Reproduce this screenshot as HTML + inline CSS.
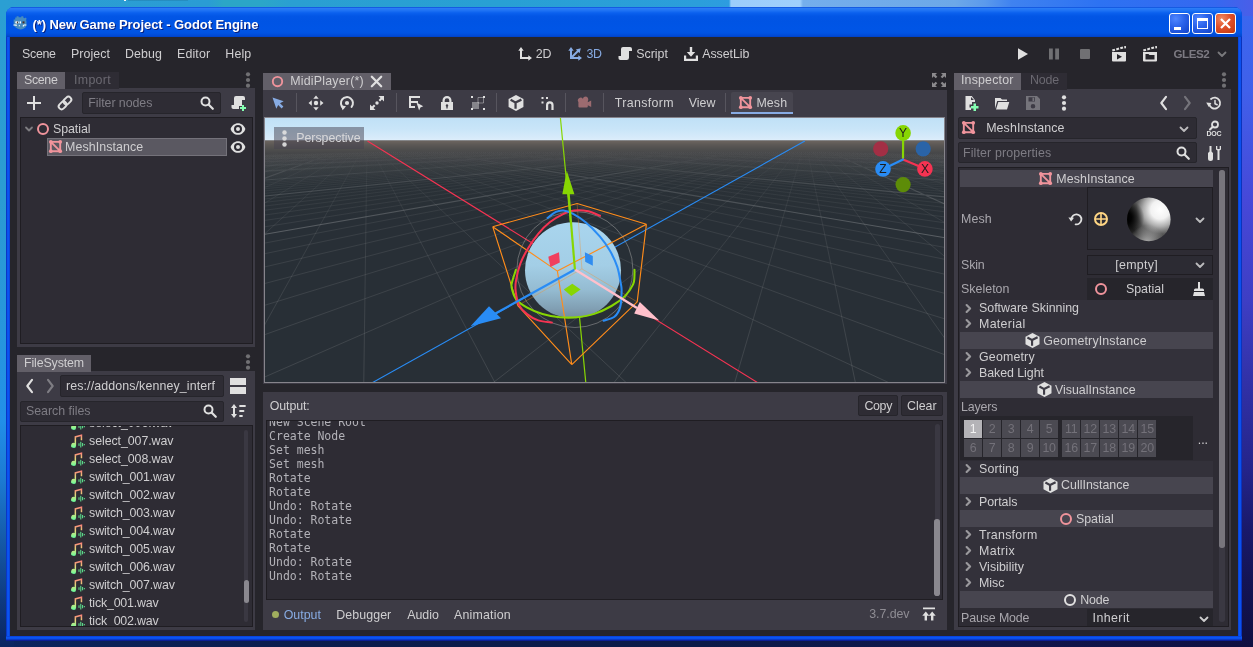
<!DOCTYPE html>
<html lang="en"><head><meta charset="utf-8"><title>(*) New Game Project - Godot Engine</title>
<style>html,body{margin:0;padding:0}body{width:1253px;height:647px;overflow:hidden;position:relative;background:#0b1c4d;font-family:'Liberation Sans','DejaVu Sans',sans-serif;font-size:12.4px;color:#cfced0}div,svg{position:absolute;box-sizing:border-box}svg{overflow:visible}</style></head>
<body><div id="root" style="left:0;top:0;width:1253px;height:647px;will-change:transform">
<div style="left:0px;top:630px;width:1253px;height:17px;background:linear-gradient(to right,#0a2560 0px,#0b2258 80px,#0b1c4d 300px,#0b1a48 700px,#10164c 1000px,#0f0f42 1253px);"></div>
<div style="left:1230px;top:0px;width:23px;height:647px;background:linear-gradient(to bottom,#3a68f0 0px,#4060ea 90px,#4648d8 200px,#3e3ec4 300px,#3030a4 390px,#24248a 470px,#19196a 530px,#141454 580px,#0f0f40 647px);"></div>
<div style="left:0px;top:0px;width:14px;height:647px;background:linear-gradient(to bottom,#2b9fd3 0px,#2b9bd2 200px,#2796dc 330px,#228fe8 420px,#1c7ad2 480px,#155aa8 540px,#0e3a80 600px,#0a2560 647px);"></div>
<div style="left:0px;top:0px;width:1253px;height:16px;background:linear-gradient(to right,#2b9fd3 0px,#2a9cd4 208px,#2ba6c6 224px,#2ba6c8 262px,#2a9fd2 292px,#28a0d4 500px,#2b9edb 700px,#2d9ce0 729px,#9bcdfb 731px,#a0d0fc 800px,#74aeec 803px,#6ca8e8 955px,#5b9aec 985px,#3f82f0 1012px,#2d72f2 1100px,#3568f0 1215px,#4a5ee8 1253px);"></div>
<div style="left:123.6px;top:0px;width:2.6px;height:1.4px;background:#f4f8fb;"></div>
<div style="left:128px;top:0px;width:60px;height:1px;background:rgba(20,60,90,.16);"></div>
<div style="left:6px;top:7px;width:1236px;height:634px;background:linear-gradient(to right,#0a24a8 0px,#0a50ee 1.2px,#0a55f2 2.6px,#0a3cd0 4px,#0a3cd0 1232px,#0a55f2 1233.2px,#0a50ee 1234.8px,#0a1e98 1236px);border-radius:8px 8px 0 0;"></div>
<div style="left:6px;top:636px;width:1236px;height:5px;background:linear-gradient(to bottom,#0a3cd0 0px,#0a55f2 1.4px,#0a4ee8 2.8px,#0a1e98 4.4px,#0a1a80 5px);"></div>
<div style="left:6px;top:7px;width:1236px;height:30px;background:linear-gradient(to bottom,#0a4ad8 0px,#2a7cf6 1.5px,#1e72f4 3.5px,#0a60ee 6px,#0356e6 9px,#0054e4 14px,#0055e6 22px,#0053e2 26px,#0048d2 29px,#0040c4 30px);border-radius:8px 8px 0 0;"></div>
<svg style="left:11.5px;top:15.3px" width="16" height="16" viewBox="0 0 16 16"><path d="M4.6 1.2h2v1.1h2.7V1.2h2v1.3l1.2.8 1-.8 1.2 1.2-.7 1.2.5 1.3v4.6l-1.3 1.9-2.3 1.4-2.2.4-2.4-.4-2.3-1.4L1.7 10.8V4.4h1.5V2.6l1.4-.2z" fill="#478cbf"/><rect x="3.3" y="6.3" width="3.4" height="2.3" rx=".8" fill="#fff"/><rect x="4.9" y="6.5" width="1" height="2" fill="#3a2a22"/><rect x="7.6" y="6.3" width="1.4" height="2.3" rx=".5" fill="#fff"/><rect x="10.5" y="6.4" width="2" height="2" fill="#4a3026"/><path d="M1.5 9.4h3.2v1.6H3.6V10.4H1.5zM14.3 9.4h-2.4l-1.2 1.1v.9h1.2v-.9h2.4zM6.8 10.2h1.1v1.1H6.8z" fill="#fff"/></svg>
<div style="top:16.6px;line-height:16px;font-size:13px;color:#fff;white-space:pre;letter-spacing:-0.064px;font-weight:bold;left:32.4px;text-shadow:1px 1px 0 #0a1f7a;">(*) New Game Project - Godot Engine</div>
<div style="left:1169px;top:13px;width:21px;height:21px;background:radial-gradient(circle at 30% 25%,#4f86ff 0%,#2a62ea 45%,#1242c8 100%);border:1px solid #fff;border-radius:3px;"><div style="left:4px;top:13px;width:7px;height:3px;background:#fff"></div></div>
<div style="left:1192px;top:13px;width:21px;height:21px;background:radial-gradient(circle at 30% 25%,#4f86ff 0%,#2a62ea 45%,#1242c8 100%);border:1px solid #fff;border-radius:3px;"><div style="left:4px;top:4px;width:11px;height:11px;border:1px solid #fff;border-top:3px solid #fff"></div></div>
<div style="left:1215px;top:13px;width:21px;height:21px;background:radial-gradient(circle at 30% 25%,#f08a62 0%,#e0502a 45%,#c0360c 100%);border:1px solid #fff;border-radius:3px;"><svg style="left:3px;top:3px" width="13" height="13" viewBox="0 0 13 13"><path d="M2 2l9 9M11 2l-9 9" stroke="#fff" stroke-width="2.2" stroke-linecap="butt"/></svg></div>
<div style="left:10px;top:37px;width:1228px;height:599px;background:#26252b;"></div>
<svg width="0" height="0" style="left:0;top:0"><defs><linearGradient id="ag" x1="0" y1="0" x2="0" y2="1"><stop offset="0" stop-color="#ff7a7a"/><stop offset=".5" stop-color="#e1dc7a"/><stop offset="1" stop-color="#66ff9e"/></linearGradient></defs></svg>
<div style="top:45.6px;line-height:16px;font-size:12.4px;color:#cfced0;white-space:pre;letter-spacing:-0.328px;left:22.1px;">Scene</div>
<div style="top:45.6px;line-height:16px;font-size:12.4px;color:#cfced0;white-space:pre;letter-spacing:0.060px;left:71px;">Project</div>
<div style="top:45.6px;line-height:16px;font-size:12.4px;color:#cfced0;white-space:pre;letter-spacing:0.097px;left:125px;">Debug</div>
<div style="top:45.6px;line-height:16px;font-size:12.4px;color:#cfced0;white-space:pre;letter-spacing:0.137px;left:177px;">Editor</div>
<div style="top:45.6px;line-height:16px;font-size:12.4px;color:#cfced0;white-space:pre;letter-spacing:0.154px;left:225.3px;">Help</div>
<svg style="left:516.6px;top:45.6px;" width="16" height="16" viewBox="0 0 16 16"><path d="M4 1L1.3 4.7H3V13h8.3v1.7L15 12l-3.7-2.7V11H5V4.7h1.7z" fill="#e0e0e0" /></svg>
<div style="top:45.6px;line-height:16px;font-size:12.4px;color:#cfced0;white-space:pre;letter-spacing:-0.072px;left:535.7px;">2D</div>
<svg style="left:566.9px;top:45.6px;" width="16" height="16" viewBox="0 0 16 16"><path d="M4 1L1.3 4.7H3V13h8.3v1.7L15 12l-3.7-2.7V11H6.4l5-5 1.2 1.2L13.8 2.2 8.8 3.4 10 4.6l-5 5V4.7h1.7z" fill="#87abe3" /></svg>
<div style="top:45.6px;line-height:16px;font-size:12.4px;color:#87abe3;white-space:pre;letter-spacing:-0.522px;left:586.6px;">3D</div>
<svg style="left:616.5px;top:45.6px;" width="16" height="16" viewBox="0 0 16 16"><path d="M6 1a2 2 0 0 0-2 2v7H1.5v2.2A1.8 1.8 0 0 0 3.3 14h6.4A2.3 2.3 0 0 0 12 11.7V5h3V3a2 2 0 0 0-2-2z" fill="#e0e0e0" /></svg>
<div style="top:45.6px;line-height:16px;font-size:12.4px;color:#cfced0;white-space:pre;letter-spacing:0.019px;left:636.2px;">Script</div>
<svg style="left:682.5px;top:45.6px;" width="16" height="16" viewBox="0 0 16 16"><path d="M6.8 1h2.4v5h3L8 10.8 3.8 6h3zM1 9.5h2.2v3.3h9.6V9.5H15V15H1z" fill="#e0e0e0" /></svg>
<div style="top:45.6px;line-height:16px;font-size:12.4px;color:#cfced0;white-space:pre;letter-spacing:-0.079px;left:702.3px;">AssetLib</div>
<svg style="left:1014.3px;top:45.6px;" width="16" height="16" viewBox="0 0 16 16"><path d="M4 2.3l10 5.7-10 5.7z" fill="#e0e0e0" /></svg>
<svg style="left:1046.2px;top:45.6px;" width="16" height="16" viewBox="0 0 16 16"><path d="M3 2.5h3.8v11H3zM9.2 2.5H13v11H9.2z" fill="#e0e0e0" fill-opacity=".4"/></svg>
<svg style="left:1076.9px;top:45.6px;" width="16" height="16" viewBox="0 0 16 16"><rect x="3" y="3" width="10" height="10" rx="1" fill="#e0e0e0" fill-opacity=".4"/></svg>
<svg style="left:1110.5px;top:45.6px;" width="16" height="16" viewBox="0 0 16 16"><path d="M1 3.6l2.7-.8.6 2-2.7.8zM5 2.4l2.7-.8.6 2-2.7.8zM9 1.3l2.7-.8.6 2-2.7.8zM13 .3L15 0v2.2l-1.5.3zM1 6h14v8.5a1 1 0 0 1-1 1H2a1 1 0 0 1-1-1z" fill="#e0e0e0" /><path d="M6 8v5.5l5-2.7z" fill="#26252b" /></svg>
<svg style="left:1141.8px;top:45.6px;" width="16" height="16" viewBox="0 0 16 16"><path d="M1 3.6l2.7-.8.6 2-2.7.8zM5 2.4l2.7-.8.6 2-2.7.8zM9 1.3l2.7-.8.6 2-2.7.8zM13 .3L15 0v2.2l-1.5.3zM1 6h14v8.5a1 1 0 0 1-1 1H2a1 1 0 0 1-1-1z" fill="#e0e0e0" /><path d="M3.5 8h3l1 1h5v4.5h-9z" fill="#26252b" /></svg>
<div style="top:45.6px;line-height:16px;font-size:11.6px;color:#7c7a82;white-space:pre;letter-spacing:-0.443px;font-weight:bold;left:1173.5px;">GLES2</div>
<svg style="left:1214.3px;top:46.1px;opacity:0.45;" width="16" height="16" viewBox="0 0 16 16"><path d="M4.5 6.5L8 10l3.5-3.5" fill="none" stroke="#e0e0e0" stroke-width="1.8" stroke-linecap="round" stroke-linejoin="round" /></svg>
<div style="left:17px;top:88px;width:238px;height:259px;background:#3d3b45;"></div>
<div style="left:17px;top:72px;width:48px;height:17px;background:#625f68;"></div>
<div style="top:72.1px;line-height:16px;font-size:12.4px;color:#cfced0;white-space:pre;letter-spacing:-0.328px;left:24px;">Scene</div>
<div style="left:65px;top:72px;width:54px;height:17px;background:#2e2c34;"></div>
<div style="top:72.1px;line-height:16px;font-size:12.4px;color:#6b6971;white-space:pre;letter-spacing:0.312px;left:74px;">Import</div>
<svg style="left:240px;top:72px;opacity:0.4;" width="16" height="16" viewBox="0 0 16 16"><g fill="#e0e0e0"><circle cx="8" cy="2.3" r="2.1"/><circle cx="8" cy="8" r="2.1"/><circle cx="8" cy="13.7" r="2.1"/></g></svg>
<svg style="left:26px;top:95.3px;" width="16" height="16" viewBox="0 0 16 16"><path d="M7 1v6H1v2h6v6h2V9h6V7H9V1z" fill="#e0e0e0" /></svg>
<svg style="left:57px;top:95.3px;" width="16" height="16" viewBox="0 0 16 16"><g transform="rotate(-45 8 8)" fill="none" stroke="#e0e0e0" stroke-width="1.9"><rect x=".3" y="5.1" width="8.6" height="5.8" rx="2.9"/><rect x="7.1" y="5.1" width="8.6" height="5.8" rx="2.9"/></g></svg>
<div style="left:82px;top:92px;width:139px;height:21.5px;background:#2e2c34;border:1px solid #26252b;border-radius:2px;"></div>
<div style="top:95.2px;line-height:16px;font-size:12.4px;color:#7e7c84;white-space:pre;letter-spacing:-0.062px;left:88.3px;">Filter nodes</div>
<svg style="left:199px;top:95.3px;" width="16" height="16" viewBox="0 0 16 16"><circle cx="6.5" cy="6.5" r="4" fill="none" stroke="#e0e0e0" stroke-width="2"/><path d="M9.8 9.8l4 4" fill="none" stroke="#e0e0e0" stroke-width="2.2" stroke-linecap="round" stroke-linejoin="round" /></svg>
<svg style="left:230px;top:95px;" width="16" height="16" viewBox="0 0 16 16"><path d="M6 1a2 2 0 0 0-2 2v7H1.5v2.2A1.8 1.8 0 0 0 3.3 14H9v-3h3V5h3V3a2 2 0 0 0-2-2z" fill="#e0e0e0" /><path d="M12 10v2h-2v2h2v2h2v-2h2v-2h-2v-2z" fill="#84ffb1" /></svg>
<div style="left:20px;top:117px;width:232.5px;height:227px;background:#2e2c34;border:1px solid #1f1d22;"></div>
<svg style="left:20.8px;top:121px;" width="16" height="16" viewBox="0 0 16 16"><path d="M5 6.5l3 3 3-3" fill="none" stroke="#e0e0e0" stroke-width="1.8" stroke-linecap="round" stroke-linejoin="round" stroke-opacity=".45"/></svg>
<svg style="left:34.8px;top:120.8px;" width="16" height="16" viewBox="0 0 16 16"><circle cx="8" cy="8" r="5" fill="none" stroke="#f0949c" stroke-width="2"/></svg>
<div style="top:120.8px;line-height:16px;font-size:12.4px;color:#cfced0;white-space:pre;letter-spacing:-0.070px;left:53px;">Spatial</div>
<svg style="left:230px;top:121px;" width="16" height="16" viewBox="0 0 16 16"><path fill-rule="evenodd" d="M8 2.2C4.6 2.2 1.7 4.5.6 8c1.1 3.5 4 5.8 7.4 5.8s6.3-2.3 7.4-5.8C14.3 4.5 11.4 2.2 8 2.2zM8 4a4 4 0 0 1 0 8 4 4 0 0 1 0-8zm0 2a2 2 0 0 0 0 4 2 2 0 0 0 0-4z" fill="#e0e0e0"/></svg>
<div style="left:47px;top:138px;width:180px;height:18px;background:#5a5861;border:1px solid #74727a;"></div>
<svg style="left:47.7px;top:139.2px;" width="15" height="15" viewBox="0 0 16 16"><path d="M3 3h10v10H3zM3 3l10 10" fill="none" stroke="#f0949c" stroke-width="2"/><g fill="#f0949c"><circle cx="3" cy="3" r="2"/><circle cx="13" cy="3" r="2"/><circle cx="3" cy="13" r="2"/><circle cx="13" cy="13" r="2"/></g></svg>
<div style="top:138.7px;line-height:16px;font-size:12.4px;color:#cfced0;white-space:pre;letter-spacing:0.097px;left:65px;">MeshInstance</div>
<svg style="left:230px;top:139px;" width="16" height="16" viewBox="0 0 16 16"><path fill-rule="evenodd" d="M8 2.2C4.6 2.2 1.7 4.5.6 8c1.1 3.5 4 5.8 7.4 5.8s6.3-2.3 7.4-5.8C14.3 4.5 11.4 2.2 8 2.2zM8 4a4 4 0 0 1 0 8 4 4 0 0 1 0-8zm0 2a2 2 0 0 0 0 4 2 2 0 0 0 0-4z" fill="#e0e0e0"/></svg>
<div style="left:17px;top:371px;width:238px;height:259px;background:#3d3b45;"></div>
<div style="left:17px;top:355px;width:74px;height:17px;background:#625f68;"></div>
<div style="top:355.1px;line-height:16px;font-size:12.4px;color:#cfced0;white-space:pre;letter-spacing:-0.128px;left:24px;">FileSystem</div>
<svg style="left:240px;top:353.6px;opacity:0.4;" width="16" height="16" viewBox="0 0 16 16"><g fill="#e0e0e0"><circle cx="8" cy="2.3" r="2.1"/><circle cx="8" cy="8" r="2.1"/><circle cx="8" cy="13.7" r="2.1"/></g></svg>
<svg style="left:22px;top:378px;" width="16" height="16" viewBox="0 0 16 16"><path d="M10 1.8L5.3 8l4.7 6.2" fill="none" stroke="#e0e0e0" stroke-width="2.1" stroke-linecap="round" stroke-linejoin="round" /></svg>
<svg style="left:41.8px;top:378px;opacity:0.4;" width="16" height="16" viewBox="0 0 16 16"><path d="M6 1.8L10.7 8 6 14.2" fill="none" stroke="#e0e0e0" stroke-width="2.1" stroke-linecap="round" stroke-linejoin="round" /></svg>
<div style="left:60px;top:375px;width:164px;height:22px;background:#2e2c34;border:1px solid #26252b;border-radius:2px;"></div>
<div style="top:378px;line-height:16px;font-size:12.4px;color:#cfced0;white-space:pre;letter-spacing:0.114px;left:66px;">res://addons/kenney_interf</div>
<svg style="left:230px;top:378px;" width="16" height="16" viewBox="0 0 16 16"><path d="M0 0h16v7H0zM0 9h16v7H0z" fill="#e0e0e0" /></svg>
<div style="left:20px;top:400.5px;width:204px;height:21.5px;background:#2e2c34;border:1px solid #26252b;border-radius:2px;"></div>
<div style="top:403px;line-height:16px;font-size:12.4px;color:#7e7c84;white-space:pre;letter-spacing:-0.021px;left:26px;">Search files</div>
<svg style="left:201.7px;top:403px;" width="16" height="16" viewBox="0 0 16 16"><circle cx="6.5" cy="6.5" r="4" fill="none" stroke="#e0e0e0" stroke-width="2"/><path d="M9.8 9.8l4 4" fill="none" stroke="#e0e0e0" stroke-width="2.2" stroke-linecap="round" stroke-linejoin="round" /></svg>
<svg style="left:230px;top:403px;" width="16" height="16" viewBox="0 0 16 16"><path d="M4 1L1 5h2v6H1l3 4 3-4H5V5h2z" fill="#e0e0e0" /><path d="M10 3h5M10 8h3.5M10 13h2" fill="none" stroke="#e0e0e0" stroke-width="1.8" stroke-linecap="round" stroke-linejoin="round" stroke-linecap="butt"/></svg>
<div style="left:20px;top:425px;width:232.5px;height:202px;background:#2e2c34;border:1px solid #1f1d22;overflow:hidden;"><svg style="left:48.9px;top:-11.1px;" width="16" height="16" viewBox="0 0 16 16"><path d="M4.6 3.3l7.6-2v6h-1.5V3.2L6.1 4.4v8a2.5 2.5 0 1 1-1.5-2.3z" fill="url(#ag)"/><path d="M9 10.3v2.6M10.8 8.8v5.7M12.6 10v3.3M14.3 11v1.3" stroke="#66ff9e" stroke-width=".9" fill="none"/></svg><div style="top:-11.4px;line-height:16px;font-size:12.4px;color:#cfced0;white-space:pre;letter-spacing:-0.080px;left:68.1px;">select_006.wav</div><svg style="left:48.9px;top:6.9px;" width="16" height="16" viewBox="0 0 16 16"><path d="M4.6 3.3l7.6-2v6h-1.5V3.2L6.1 4.4v8a2.5 2.5 0 1 1-1.5-2.3z" fill="url(#ag)"/><path d="M9 10.3v2.6M10.8 8.8v5.7M12.6 10v3.3M14.3 11v1.3" stroke="#66ff9e" stroke-width=".9" fill="none"/></svg><div style="top:6.6px;line-height:16px;font-size:12.4px;color:#cfced0;white-space:pre;letter-spacing:-0.080px;left:68.1px;">select_007.wav</div><svg style="left:48.9px;top:24.9px;" width="16" height="16" viewBox="0 0 16 16"><path d="M4.6 3.3l7.6-2v6h-1.5V3.2L6.1 4.4v8a2.5 2.5 0 1 1-1.5-2.3z" fill="url(#ag)"/><path d="M9 10.3v2.6M10.8 8.8v5.7M12.6 10v3.3M14.3 11v1.3" stroke="#66ff9e" stroke-width=".9" fill="none"/></svg><div style="top:24.6px;line-height:16px;font-size:12.4px;color:#cfced0;white-space:pre;letter-spacing:-0.080px;left:68.1px;">select_008.wav</div><svg style="left:48.9px;top:43px;" width="16" height="16" viewBox="0 0 16 16"><path d="M4.6 3.3l7.6-2v6h-1.5V3.2L6.1 4.4v8a2.5 2.5 0 1 1-1.5-2.3z" fill="url(#ag)"/><path d="M9 10.3v2.6M10.8 8.8v5.7M12.6 10v3.3M14.3 11v1.3" stroke="#66ff9e" stroke-width=".9" fill="none"/></svg><div style="top:42.7px;line-height:16px;font-size:12.4px;color:#cfced0;white-space:pre;letter-spacing:-0.133px;left:68.1px;">switch_001.wav</div><svg style="left:48.9px;top:61px;" width="16" height="16" viewBox="0 0 16 16"><path d="M4.6 3.3l7.6-2v6h-1.5V3.2L6.1 4.4v8a2.5 2.5 0 1 1-1.5-2.3z" fill="url(#ag)"/><path d="M9 10.3v2.6M10.8 8.8v5.7M12.6 10v3.3M14.3 11v1.3" stroke="#66ff9e" stroke-width=".9" fill="none"/></svg><div style="top:60.7px;line-height:16px;font-size:12.4px;color:#cfced0;white-space:pre;letter-spacing:-0.133px;left:68.1px;">switch_002.wav</div><svg style="left:48.9px;top:79px;" width="16" height="16" viewBox="0 0 16 16"><path d="M4.6 3.3l7.6-2v6h-1.5V3.2L6.1 4.4v8a2.5 2.5 0 1 1-1.5-2.3z" fill="url(#ag)"/><path d="M9 10.3v2.6M10.8 8.8v5.7M12.6 10v3.3M14.3 11v1.3" stroke="#66ff9e" stroke-width=".9" fill="none"/></svg><div style="top:78.7px;line-height:16px;font-size:12.4px;color:#cfced0;white-space:pre;letter-spacing:-0.133px;left:68.1px;">switch_003.wav</div><svg style="left:48.9px;top:97px;" width="16" height="16" viewBox="0 0 16 16"><path d="M4.6 3.3l7.6-2v6h-1.5V3.2L6.1 4.4v8a2.5 2.5 0 1 1-1.5-2.3z" fill="url(#ag)"/><path d="M9 10.3v2.6M10.8 8.8v5.7M12.6 10v3.3M14.3 11v1.3" stroke="#66ff9e" stroke-width=".9" fill="none"/></svg><div style="top:96.7px;line-height:16px;font-size:12.4px;color:#cfced0;white-space:pre;letter-spacing:-0.133px;left:68.1px;">switch_004.wav</div><svg style="left:48.9px;top:115px;" width="16" height="16" viewBox="0 0 16 16"><path d="M4.6 3.3l7.6-2v6h-1.5V3.2L6.1 4.4v8a2.5 2.5 0 1 1-1.5-2.3z" fill="url(#ag)"/><path d="M9 10.3v2.6M10.8 8.8v5.7M12.6 10v3.3M14.3 11v1.3" stroke="#66ff9e" stroke-width=".9" fill="none"/></svg><div style="top:114.7px;line-height:16px;font-size:12.4px;color:#cfced0;white-space:pre;letter-spacing:-0.133px;left:68.1px;">switch_005.wav</div><svg style="left:48.9px;top:133px;" width="16" height="16" viewBox="0 0 16 16"><path d="M4.6 3.3l7.6-2v6h-1.5V3.2L6.1 4.4v8a2.5 2.5 0 1 1-1.5-2.3z" fill="url(#ag)"/><path d="M9 10.3v2.6M10.8 8.8v5.7M12.6 10v3.3M14.3 11v1.3" stroke="#66ff9e" stroke-width=".9" fill="none"/></svg><div style="top:132.7px;line-height:16px;font-size:12.4px;color:#cfced0;white-space:pre;letter-spacing:-0.133px;left:68.1px;">switch_006.wav</div><svg style="left:48.9px;top:151px;" width="16" height="16" viewBox="0 0 16 16"><path d="M4.6 3.3l7.6-2v6h-1.5V3.2L6.1 4.4v8a2.5 2.5 0 1 1-1.5-2.3z" fill="url(#ag)"/><path d="M9 10.3v2.6M10.8 8.8v5.7M12.6 10v3.3M14.3 11v1.3" stroke="#66ff9e" stroke-width=".9" fill="none"/></svg><div style="top:150.7px;line-height:16px;font-size:12.4px;color:#cfced0;white-space:pre;letter-spacing:-0.133px;left:68.1px;">switch_007.wav</div><svg style="left:48.9px;top:169px;" width="16" height="16" viewBox="0 0 16 16"><path d="M4.6 3.3l7.6-2v6h-1.5V3.2L6.1 4.4v8a2.5 2.5 0 1 1-1.5-2.3z" fill="url(#ag)"/><path d="M9 10.3v2.6M10.8 8.8v5.7M12.6 10v3.3M14.3 11v1.3" stroke="#66ff9e" stroke-width=".9" fill="none"/></svg><div style="top:168.7px;line-height:16px;font-size:12.4px;color:#cfced0;white-space:pre;letter-spacing:-0.187px;left:68.1px;">tick_001.wav</div><svg style="left:48.9px;top:187px;" width="16" height="16" viewBox="0 0 16 16"><path d="M4.6 3.3l7.6-2v6h-1.5V3.2L6.1 4.4v8a2.5 2.5 0 1 1-1.5-2.3z" fill="url(#ag)"/><path d="M9 10.3v2.6M10.8 8.8v5.7M12.6 10v3.3M14.3 11v1.3" stroke="#66ff9e" stroke-width=".9" fill="none"/></svg><div style="top:186.7px;line-height:16px;font-size:12.4px;color:#cfced0;white-space:pre;letter-spacing:-0.187px;left:68.1px;">tick_002.wav</div></div>
<div style="left:244.3px;top:430px;width:3.4px;height:192px;background:#3a3842;border-radius:2px;"></div>
<div style="left:243.6px;top:579.5px;width:5px;height:23.3px;background:#8a888f;border-radius:2.5px;"></div>
<div style="left:263px;top:72.5px;width:128px;height:17.5px;background:#625f68;"></div>
<svg style="left:270.1px;top:73.5px;" width="15" height="15" viewBox="0 0 16 16"><circle cx="8" cy="8" r="5" fill="none" stroke="#f0949c" stroke-width="2"/></svg>
<div style="top:72.9px;line-height:16px;font-size:12.4px;color:#cfced0;white-space:pre;letter-spacing:0.214px;left:290.2px;">MidiPlayer(*)</div>
<svg style="left:368.7px;top:73.5px;" width="15" height="15" viewBox="0 0 16 16"><path d="M3 3l10 10M13 3L3 13" fill="none" stroke="#e0e0e0" stroke-width="2.4" stroke-linecap="round" stroke-linejoin="round" stroke-linecap="butt"/></svg>
<svg style="left:930.8px;top:71.8px;" width="16" height="16" viewBox="0 0 16 16"><path d="M1 1h5L4.3 2.7l2 2-1.6 1.6-2-2L1 6zM15 1v5l-1.7-1.7-2 2-1.6-1.6 2-2L10 1zM1 15v-5l1.7 1.7 2-2 1.6 1.6-2 2L6 15zM15 15h-5l1.7-1.7-2-2 1.6-1.6 2 2L15 10z" fill="#e0e0e0" fill-opacity=".55"/></svg>
<div style="left:263px;top:90px;width:684px;height:294px;background:#3d3b45;"></div>
<svg style="left:270.2px;top:94.7px;" width="16" height="16" viewBox="0 0 16 16"><path d="M2.5 2.5l3.8 11.2 1.9-3.7 3.4 3.4 1.8-1.8-3.4-3.4 3.7-1.9z" fill="#87abe3" /></svg>
<div style="left:295.8px;top:93px;width:1px;height:19px;background:#57555e;"></div>
<div style="left:395.8px;top:93px;width:1px;height:19px;background:#57555e;"></div>
<div style="left:496.1px;top:93px;width:1px;height:19px;background:#57555e;"></div>
<div style="left:565.4px;top:93px;width:1px;height:19px;background:#57555e;"></div>
<div style="left:602.9px;top:93px;width:1px;height:19px;background:#57555e;"></div>
<div style="left:725.2px;top:93px;width:1px;height:19px;background:#57555e;"></div>
<svg style="left:307.9px;top:94.7px;" width="16" height="16" viewBox="0 0 16 16"><path d="M8 .5L5.3 3.8h5.4zM8 15.5l-2.7-3.3h5.4zM.5 8l3.3-2.7v5.4zM15.5 8l-3.3-2.7v5.4z" fill="#e0e0e0" /><circle cx="8" cy="8" r="2.2" fill="#e0e0e0"/></svg>
<svg style="left:338.6px;top:94.7px;" width="16" height="16" viewBox="0 0 16 16"><path d="M4.3 12.9A6 6 0 1 1 12.6 11.9" fill="none" stroke="#e0e0e0" stroke-width="2" stroke-linecap="round" stroke-linejoin="round" /><path d="M1.8 10.2l5.2 1-3.4 4z" fill="#e0e0e0" /><circle cx="8" cy="8" r="2.1" fill="#e0e0e0"/></svg>
<svg style="left:369.3px;top:94.7px;" width="16" height="16" viewBox="0 0 16 16"><path d="M9.5 1H15v5.5l-2-2-1.9 1.9-1.5-1.5 1.9-1.9zM6.5 15H1V9.5l2 2 1.9-1.9 1.5 1.5-1.9 1.9z" fill="#e0e0e0" /><circle cx="8" cy="8" r="1.7" fill="#e0e0e0"/></svg>
<svg style="left:407.6px;top:94.7px;" width="16" height="16" viewBox="0 0 16 16"><path d="M1 1h11v2H3v3h7v2H3v3h4v2H1z" fill="#e0e0e0" /><path d="M8.5 7.5l2.6 8 1.3-2.9 2.9-1.3z" fill="#e0e0e0" /></svg>
<svg style="left:438.6px;top:94.7px;" width="16" height="16" viewBox="0 0 16 16"><path fill-rule="evenodd" d="M3.5 7V5.5a4.5 4.5 0 0 1 9 0V7H14v8H2V7zm2.2 0h4.6V5.5a2.3 2.3 0 0 0-4.6 0zM8 9.3a1.3 1.3 0 0 0-.65 2.4V13.5h1.3v-1.8A1.3 1.3 0 0 0 8 9.3z" fill="#e0e0e0"/></svg>
<svg style="left:469.9px;top:94.7px;" width="16" height="16" viewBox="0 0 16 16"><path d="M8 2.5h5.5V8H8z" fill="none" stroke="#e0e0e0" stroke-opacity=".45"/><rect x="2" y="7" width="7" height="7" fill="#e0e0e0" fill-opacity=".45"/><g fill="#e0e0e0"><rect x="1" y="1" width="2" height="2"/><rect x="13" y="1" width="2" height="2"/><rect x="13" y="13" width="2" height="2"/><rect x="1" y="13" width="2" height="2"/></g></svg>
<svg style="left:506.6px;top:93.7px;" width="18" height="18" viewBox="0 0 16 16"><path d="M8 .9l6.6 3.5v7.2L8 15.1l-6.6-3.5V4.4z" fill="#e0e0e0" /><path d="M3.2 5.2L7.6 7.6v5.4M7.6 7.6l5.2-2.6" fill="none" stroke="#3f3d47" stroke-width="2"/></svg>
<svg style="left:539.7px;top:94.7px;" width="16" height="16" viewBox="0 0 16 16"><path d="M6 15V10a3.8 3.8 0 0 1 7.6 0V15h-2.2V10a1.6 1.6 0 0 0-3.2 0V15z" fill="#e0e0e0" /><g fill="#e0e0e0"><rect x="1.5" y="2" width="2" height="2"/><rect x="6" y="2" width="2" height="2"/><rect x="1.5" y="6.5" width="2" height="2"/></g></svg>
<svg style="left:576px;top:94.7px;" width="16" height="16" viewBox="0 0 16 16"><path d="M9.8 1.5a3.1 3.1 0 0 0-3 2.3A2.6 2.6 0 1 0 2.4 6.9V11.5a1.1 1.1 0 0 0 1.1 1.1h7.2a1.1 1.1 0 0 0 1.1-1.1v-1.3l3.4 1.9V5.4l-3.4 1.9V6.2A3.1 3.1 0 0 0 9.8 1.5z" fill="#fc9c9c" fill-opacity=".5"/></svg>
<div style="top:94.7px;line-height:16px;font-size:12.4px;color:#cfced0;white-space:pre;letter-spacing:0.356px;left:614.8px;">Transform</div>
<div style="top:94.7px;line-height:16px;font-size:12.4px;color:#cfced0;white-space:pre;letter-spacing:-0.010px;left:688.8px;">View</div>
<div style="left:731px;top:92px;width:62px;height:22px;background:#47454f;border-radius:2px;"></div>
<div style="left:731px;top:112px;width:62px;height:2px;background:#87abe3;"></div>
<svg style="left:737.8px;top:94.9px;" width="15" height="15" viewBox="0 0 16 16"><path d="M3 3h10v10H3zM3 3l10 10" fill="none" stroke="#f0949c" stroke-width="2"/><g fill="#f0949c"><circle cx="3" cy="3" r="2"/><circle cx="13" cy="3" r="2"/><circle cx="3" cy="13" r="2"/><circle cx="13" cy="13" r="2"/></g></svg>
<div style="top:94.7px;line-height:16px;font-size:12.4px;color:#cfced0;white-space:pre;letter-spacing:0.122px;left:756.4px;">Mesh</div>
<svg style="left:265px;top:117px;overflow:hidden" width="680" height="266" viewBox="0 0 680 266"><defs><linearGradient id="sky" x1="0" y1="0" x2="0" y2="1"><stop offset="0" stop-color="#bfe0f6"/><stop offset=".5" stop-color="#c9e5f8"/><stop offset=".9" stop-color="#d8ebfa"/><stop offset="1" stop-color="#e0effb"/></linearGradient><linearGradient id="gnd" gradientUnits="userSpaceOnUse" x1="0" y1="23.5" x2="0" y2="266"><stop offset="0.0000" stop-color="#6c655f"/><stop offset="0.0041" stop-color="#69625d"/><stop offset="0.0082" stop-color="#655f5b"/><stop offset="0.0124" stop-color="#615c58"/><stop offset="0.0165" stop-color="#5d5956"/><stop offset="0.0247" stop-color="#575452"/><stop offset="0.0330" stop-color="#51504f"/><stop offset="0.0412" stop-color="#4c4c4c"/><stop offset="0.0536" stop-color="#454648"/><stop offset="0.0660" stop-color="#404244"/><stop offset="0.0825" stop-color="#3a3d41"/><stop offset="0.1031" stop-color="#34393d"/><stop offset="0.1320" stop-color="#2f353a"/><stop offset="0.1856" stop-color="#2a3137"/><stop offset="0.2474" stop-color="#293036"/><stop offset="0.3299" stop-color="#282f36"/><stop offset="1.0000" stop-color="#282f36"/></linearGradient><linearGradient id="gf" gradientUnits="userSpaceOnUse" x1="0" y1="33" x2="0" y2="266"><stop offset="0" stop-color="#8a8c8e" stop-opacity="0"/><stop offset=".1" stop-color="#8a8c8e" stop-opacity=".08"/><stop offset=".35" stop-color="#8a8c8e" stop-opacity=".17"/><stop offset="1" stop-color="#8a8c8e" stop-opacity=".25"/></linearGradient><linearGradient id="gp" gradientUnits="userSpaceOnUse" x1="0" y1="33" x2="0" y2="266"><stop offset="0" stop-color="#a8aaac" stop-opacity="0"/><stop offset=".1" stop-color="#a8aaac" stop-opacity=".17"/><stop offset=".35" stop-color="#a8aaac" stop-opacity=".38"/><stop offset="1" stop-color="#a8aaac" stop-opacity=".48"/></linearGradient><linearGradient id="sph" x1="0" y1="0" x2="0" y2="1"><stop offset="0" stop-color="#a9d5ee"/><stop offset=".45" stop-color="#a3cee6"/><stop offset=".7" stop-color="#95bcd2"/><stop offset=".9" stop-color="#819fb3"/><stop offset="1" stop-color="#738c9e"/></linearGradient></defs><rect x="0" y="0" width="680" height="23.6" fill="url(#sky)"/><rect x="0" y="23.5" width="680" height="242.5" fill="url(#gnd)"/><path d="M327.3 29.5L-4.0 38.4M331.8 29.5L684.0 38.2M330.1 29.5L-4.0 38.6M328.7 29.5L684.0 38.4M333.0 29.5L-4.0 38.8M325.6 29.5L684.0 38.6M335.9 29.5L-4.0 39.0M322.5 29.5L684.0 38.8M338.7 29.5L-4.0 39.2M319.4 29.5L684.0 39.1M341.6 29.5L-4.0 39.4M316.3 29.5L684.0 39.3M344.4 29.5L-4.0 39.6M313.2 29.5L684.0 39.5M350.1 29.5L-4.0 40.1M306.9 29.5L684.0 40.0M353.0 29.5L-4.0 40.4M303.8 29.5L684.0 40.2M355.8 29.5L-4.0 40.6M301.1 29.5L684.0 40.5M358.7 29.5L-4.0 40.9M299.4 29.5L684.0 40.8M360.8 29.5L-4.0 41.2M297.7 29.6L684.0 41.0M362.5 29.5L-4.0 41.4M295.9 29.6L684.0 41.3M364.2 29.6L-4.0 41.7M294.1 29.6L684.0 41.6M367.8 29.6L-4.0 42.4M290.5 29.7L684.0 42.2M369.6 29.7L-4.0 42.7M288.6 29.8L684.0 42.6M371.4 29.7L-4.0 43.0M286.7 29.8L684.0 42.9M373.2 29.8L-4.0 43.4M284.8 29.9L684.0 43.2M375.1 29.8L-4.0 43.7M282.8 29.9L684.0 43.6M377.0 29.8L-4.0 44.1M280.9 30.0L684.0 44.0M378.9 29.9L-4.0 44.5M278.8 30.0L684.0 44.4M382.9 30.0L-4.0 45.3M274.7 30.1L684.0 45.2M384.9 30.0L-4.0 45.7M272.6 30.2L684.0 45.6M386.9 30.1L-4.0 46.2M270.5 30.2L684.0 46.1M389.0 30.1L-4.0 46.7M268.3 30.3L684.0 46.6M391.1 30.2L-4.0 47.1M266.1 30.3L684.0 47.1M393.2 30.2L-4.0 47.7M263.8 30.4L684.0 47.6M395.4 30.2L-4.0 48.2M261.5 30.4L684.0 48.1M399.8 30.3L-4.0 49.3M256.8 30.5L684.0 49.3M402.0 30.4L-4.0 50.0M254.4 30.6L684.0 49.9M404.3 30.4L-4.0 50.6M252.0 30.6L684.0 50.6M406.7 30.5L-4.0 51.3M249.5 30.7L684.0 51.2M409.0 30.6L-4.0 52.0M247.0 30.8L684.0 52.0M411.4 30.6L-4.0 52.8M244.4 30.8L684.0 52.7M413.9 30.7L-4.0 53.5M241.8 30.9L684.0 53.5M418.9 30.8L-4.0 55.3M236.4 31.0L684.0 55.3M421.4 30.8L-4.0 56.2M233.6 31.1L684.0 56.3M424.0 30.9L-4.0 57.2M230.8 31.2L684.0 57.3M426.7 30.9L-4.0 58.3M227.9 31.2L684.0 58.4M429.4 31.0L-4.0 59.4M225.0 31.3L684.0 59.5M432.1 31.1L-4.0 60.6M222.0 31.4L684.0 60.7M434.9 31.1L-4.0 61.9M219.0 31.4L684.0 62.1M440.6 31.3L-4.0 64.8M212.7 31.6L684.0 65.0M443.5 31.3L-4.0 66.4M209.5 31.7L684.0 66.7M446.5 31.4L-4.0 68.1M206.2 31.7L684.0 68.5M449.5 31.5L-4.0 70.0M202.9 31.8L684.0 70.4M452.6 31.5L-4.0 72.0M199.5 31.9L684.0 72.5M455.7 31.6L-4.0 74.3M196.0 32.0L684.0 74.9M458.9 31.7L-4.0 76.7M192.4 32.1L684.0 77.4M465.4 31.8L-4.0 82.4M185.1 32.3L684.0 83.4M468.8 31.9L-4.0 85.8M181.3 32.3L684.0 86.9M472.3 32.0L-4.0 89.5M177.5 32.4L684.0 90.9M475.7 32.0L-4.0 93.7M173.5 32.5L684.0 95.3M479.3 32.1L-4.0 98.5M169.5 32.6L684.0 100.5M482.9 32.2L-4.0 104.0M165.3 32.7L684.0 106.4M486.7 32.3L-4.0 110.4M161.1 32.8L684.0 113.3M494.3 32.4L-4.0 126.8M152.4 33.0L684.0 131.2M498.2 32.5L-4.0 137.5M147.9 33.1L684.0 143.2M502.2 32.6L-4.0 150.8M143.2 33.3L684.0 158.2M506.3 32.7L-4.0 167.5M138.5 33.4L684.0 177.5M510.5 32.8L-4.0 189.4M133.7 33.5L684.0 203.2M514.8 32.9L-4.0 219.0M128.7 33.6L684.0 239.3M519.1 33.0L-4.0 261.6M123.6 33.7L633.2 270.0M528.1 33.2L222.6 270.0M113.0 34.0L365.9 270.0M532.7 33.3L345.5 270.0M107.5 34.1L232.3 270.0M537.5 33.4L468.4 270.0M101.9 34.2L98.7 270.0M542.3 33.5L591.3 270.0M96.1 34.4L-4.0 214.3M547.3 33.6L684.0 227.3M90.2 34.5L-4.0 120.2M552.3 33.7L684.0 143.0M84.1 34.7L-4.0 88.3M557.5 33.9L684.0 108.1M77.8 34.8L-4.0 72.3M568.3 34.1L684.0 76.9M64.8 35.1L-4.0 56.2M573.8 34.2L684.0 68.6M58.0 35.3L-4.0 51.5M579.5 34.3L684.0 62.6M51.0 35.5L-4.0 48.1M585.4 34.5L684.0 58.0M43.7 35.6L-4.0 45.4M591.4 34.6L684.0 54.3M36.3 35.8L-4.0 43.2M597.5 34.7L684.0 51.4M28.7 36.0L-4.0 41.5M603.8 34.9L684.0 49.0M20.8 36.2L-4.0 40.0M616.8 35.2L684.0 45.2M4.2 36.6L-4.0 37.7M623.6 35.3L684.0 43.7M630.6 35.5L684.0 42.4M637.8 35.6L684.0 41.3M645.1 35.8L684.0 40.3M652.7 36.0L684.0 39.4M660.4 36.1L684.0 38.6M676.7 36.5L684.0 37.2" stroke="url(#gf)" stroke-width="1" fill="none"/><path d="M324.4 29.5L-4.0 38.2M334.9 29.5L684.0 38.0M347.3 29.5L-4.0 39.9M310.1 29.5L684.0 39.7M366.0 29.6L-4.0 42.0M292.3 29.7L684.0 41.9M380.9 29.9L-4.0 44.9M276.8 30.1L684.0 44.8M397.6 30.3L-4.0 48.8M259.2 30.5L684.0 48.7M416.3 30.7L-4.0 54.4M239.1 31.0L684.0 54.4M437.7 31.2L-4.0 63.3M215.9 31.5L684.0 63.5M462.1 31.7L-4.0 79.4M188.8 32.2L684.0 80.3M490.4 32.4L-4.0 117.9M156.8 32.9L684.0 121.4M562.8 34.0L684.0 89.0M71.4 35.0L-4.0 62.6M610.2 35.0L684.0 46.9M12.6 36.4L-4.0 38.7M668.4 36.3L684.0 37.8" stroke="url(#gp)" stroke-width="1.1" fill="none"/><path d="M102.5 24.0L5645.3 3457.5" stroke="#f53352" stroke-width="1.1"/><path d="M539.8 24.0L-5603.6 3457.5" stroke="#298cf5" stroke-width="1.1"/><path d="M334.6 409.6L-449.6 -7768.9" stroke="#87d603" stroke-width="1.2"/><circle cx="308" cy="153.2" r="48" fill="url(#sph)"/><path d="M312.1 86.5L316.9 151.9M252.8 188.6L316.9 151.9M372.2 184.9L316.9 151.9" stroke="#ff8c1a" stroke-opacity=".35" stroke-width="1" fill="none"/><path d="M227.7 109.7L312.1 86.5M312.1 86.5L381.4 107.3M227.7 109.7L292.4 154.1M292.4 154.1L381.4 107.3M227.7 109.7L252.8 188.6M381.4 107.3L372.2 184.9M292.4 154.1L306.8 247.7M252.8 188.6L306.8 247.7M372.2 184.9L306.8 247.7" stroke="#ff8c1a" stroke-width="1.15" fill="none"/><circle cx="309.9" cy="152.5" r="58" fill="none" stroke="#9a9a9a" stroke-opacity=".55" stroke-width="1"/><path d="M250.9 152.8C250.3 154.7 248.0 161.4 247.3 164.3C246.6 167.2 246.0 167.4 246.6 170.3C247.2 173.2 248.4 178.5 250.9 181.8C253.4 185.2 257.3 187.9 261.7 190.4C266.1 192.9 272.0 195.3 277.5 196.9C283.0 198.5 289.0 199.6 294.8 200.2C300.5 200.8 306.2 200.8 312.0 200.2C317.8 199.6 323.5 198.8 329.3 196.9C335.0 195.0 341.3 192.0 346.5 189.0C351.7 186.0 356.6 182.5 360.2 178.9C363.8 175.3 366.6 170.5 368.1 167.4C369.6 164.2 369.2 162.4 369.4 160.0C369.6 157.6 369.5 154.0 369.5 152.8" fill="none" stroke="#87d603" stroke-width="2.05" stroke-linecap="round"/><path d="M335.0 98.8C333.1 98.1 327.8 95.2 323.5 94.3C319.2 93.4 313.4 93.0 309.1 93.5C304.8 94.0 301.7 95.4 297.6 97.4C293.5 99.4 288.8 102.1 284.7 105.3C280.6 108.5 276.8 112.5 273.2 116.8C269.6 121.1 266.1 126.2 263.1 131.2C260.1 136.2 257.2 141.5 255.2 147.0C253.2 152.5 251.6 159.7 250.9 164.3C250.1 168.9 250.2 170.7 250.7 174.6C251.2 178.5 252.0 183.9 253.8 187.6C255.6 191.3 258.5 194.3 261.7 196.9C264.9 199.5 269.0 202.0 273.2 203.4C277.4 204.8 284.5 205.2 286.8 205.5" fill="none" stroke="#f53352" stroke-width="2.05" stroke-linecap="round"/><path d="M282.5 101.0C283.8 100.0 287.8 96.4 290.4 95.2C293.0 93.9 295.5 93.2 298.4 93.5C301.3 93.8 304.0 94.7 307.7 96.7C311.4 98.7 316.1 101.5 320.6 105.3C325.2 109.1 330.9 114.9 335.0 119.7C339.1 124.5 342.2 129.1 345.1 134.1C348.0 139.1 350.5 144.4 352.3 149.9C354.1 155.4 355.2 163.0 355.9 167.1C356.6 171.2 356.7 170.7 356.6 174.6C356.5 178.5 356.3 186.2 355.1 190.4C353.9 194.6 352.1 197.6 349.4 199.8C346.6 202.0 340.4 203.0 338.6 203.7" fill="none" stroke="#298cf5" stroke-width="2.05" stroke-linecap="round"/><path d="M309.9 152.5L230.0 196.8" stroke="#298cf5" stroke-width="2.2"/><path d="M309.9 152.5L372.0 190.9" stroke="#ffc0cb" stroke-width="2.4"/><path d="M309.9 152.5L303.6 76.0" stroke="#87d603" stroke-width="2.2"/><polygon points="205.5,209.3 224.0,189.3 236.0,201.2" fill="#298cf5"/><polygon points="394.2,203.4 374.8,185.0 369.2,196.5" fill="#ffc0cb"/><polygon points="301.8,53.8 297.3,77.2 309.4,77.2" fill="#87d603"/><polygon points="283.3,139.8 294.0,135.2 294.8,145.6 285.4,149.9" fill="#f0405e"/><polygon points="319.9,135.2 327.8,139.1 327.8,148.7 320.2,144.8" fill="#2f8cf0"/><polygon points="298.8,172.5 307.3,166.7 315.6,172.5 306.3,178.9" fill="#87d603"/><circle cx="615.7" cy="31.8" r="7.6" fill="#a32f45"/><circle cx="658.2" cy="31.8" r="7.6" fill="#2a64a8"/><circle cx="638.1" cy="67.6" r="7.6" fill="#5d8c08"/><path d="M638.0 42.4L638.1 23.0" stroke="#87d603" stroke-width="2.2" stroke-linecap="round"/><path d="M638.0 42.4L653.5 49.0" stroke="#f53352" stroke-width="2.2" stroke-linecap="round"/><path d="M638.0 42.4L624.5 49.0" stroke="#298cf5" stroke-width="2.2" stroke-linecap="round"/><circle cx="638.1" cy="15.9" r="7.8" fill="#87d603"/><text x="638.1" y="20.1" text-anchor="middle" font-family="Liberation Sans,DejaVu Sans,sans-serif" font-size="12" fill="#1c1c1c">Y</text><circle cx="659.9" cy="51.9" r="7.8" fill="#f53352"/><text x="659.9" y="56.1" text-anchor="middle" font-family="Liberation Sans,DejaVu Sans,sans-serif" font-size="12" fill="#1c1c1c">X</text><circle cx="618.0" cy="51.9" r="7.8" fill="#298cf5"/><text x="618.0" y="56.1" text-anchor="middle" font-family="Liberation Sans,DejaVu Sans,sans-serif" font-size="12" fill="#1c1c1c">Z</text></svg>
<div style="left:274px;top:127px;width:90px;height:22px;background:rgba(70,66,80,.5);"></div>
<svg style="left:276.4px;top:129.5px;opacity:.92;" width="17" height="17" viewBox="0 0 16 16"><g fill="#e0e0e0"><circle cx="8" cy="2.3" r="2.1"/><circle cx="8" cy="8" r="2.1"/><circle cx="8" cy="13.7" r="2.1"/></g></svg>
<div style="top:130px;line-height:16px;font-size:12.4px;color:#d8d8da;white-space:pre;letter-spacing:-0.041px;left:296.3px;">Perspective</div>
<div style="left:264px;top:117px;width:681px;height:266px;border:1px solid #86848b;"></div>
<div style="left:263px;top:392px;width:684px;height:238px;background:#3d3b45;"></div>
<div style="top:398px;line-height:16px;font-size:12.4px;color:#cfced0;white-space:pre;letter-spacing:-0.106px;left:269.8px;">Output:</div>
<div style="left:858px;top:395px;width:40px;height:21px;background:#2e2c34;border:1px solid #26252b;border-radius:2px;"></div>
<div style="top:397.6px;line-height:16px;font-size:12.4px;color:#cfced0;white-space:pre;letter-spacing:-0.359px;left:864.5px;">Copy</div>
<div style="left:901px;top:395px;width:42px;height:21px;background:#2e2c34;border:1px solid #26252b;border-radius:2px;"></div>
<div style="top:397.6px;line-height:16px;font-size:12.4px;color:#cfced0;white-space:pre;letter-spacing:-0.022px;left:907px;">Clear</div>
<div style="left:266px;top:420px;width:677px;height:180px;background:#2e2c34;border:1px solid #1f1d22;overflow:hidden;"><div style="left:2.1px;top:-6.2px;line-height:15px;font-family:'DejaVu Sans Mono','Liberation Mono',monospace;font-size:11.5px;color:#b2b1b7;white-space:pre;letter-spacing:-.015px">New Scene Root</div><div style="left:2.1px;top:7.8px;line-height:15px;font-family:'DejaVu Sans Mono','Liberation Mono',monospace;font-size:11.5px;color:#b2b1b7;white-space:pre;letter-spacing:-.015px">Create Node</div><div style="left:2.1px;top:21.8px;line-height:15px;font-family:'DejaVu Sans Mono','Liberation Mono',monospace;font-size:11.5px;color:#b2b1b7;white-space:pre;letter-spacing:-.015px">Set mesh</div><div style="left:2.1px;top:35.8px;line-height:15px;font-family:'DejaVu Sans Mono','Liberation Mono',monospace;font-size:11.5px;color:#b2b1b7;white-space:pre;letter-spacing:-.015px">Set mesh</div><div style="left:2.1px;top:49.8px;line-height:15px;font-family:'DejaVu Sans Mono','Liberation Mono',monospace;font-size:11.5px;color:#b2b1b7;white-space:pre;letter-spacing:-.015px">Rotate</div><div style="left:2.1px;top:63.8px;line-height:15px;font-family:'DejaVu Sans Mono','Liberation Mono',monospace;font-size:11.5px;color:#b2b1b7;white-space:pre;letter-spacing:-.015px">Rotate</div><div style="left:2.1px;top:77.8px;line-height:15px;font-family:'DejaVu Sans Mono','Liberation Mono',monospace;font-size:11.5px;color:#b2b1b7;white-space:pre;letter-spacing:-.015px">Undo: Rotate</div><div style="left:2.1px;top:91.8px;line-height:15px;font-family:'DejaVu Sans Mono','Liberation Mono',monospace;font-size:11.5px;color:#b2b1b7;white-space:pre;letter-spacing:-.015px">Undo: Rotate</div><div style="left:2.1px;top:105.8px;line-height:15px;font-family:'DejaVu Sans Mono','Liberation Mono',monospace;font-size:11.5px;color:#b2b1b7;white-space:pre;letter-spacing:-.015px">Rotate</div><div style="left:2.1px;top:119.8px;line-height:15px;font-family:'DejaVu Sans Mono','Liberation Mono',monospace;font-size:11.5px;color:#b2b1b7;white-space:pre;letter-spacing:-.015px">Rotate</div><div style="left:2.1px;top:133.8px;line-height:15px;font-family:'DejaVu Sans Mono','Liberation Mono',monospace;font-size:11.5px;color:#b2b1b7;white-space:pre;letter-spacing:-.015px">Undo: Rotate</div><div style="left:2.1px;top:147.8px;line-height:15px;font-family:'DejaVu Sans Mono','Liberation Mono',monospace;font-size:11.5px;color:#b2b1b7;white-space:pre;letter-spacing:-.015px">Undo: Rotate</div></div>
<div style="left:934.8px;top:424px;width:5px;height:172px;background:#3a3842;border-radius:2.5px;"></div>
<div style="left:934.4px;top:518.6px;width:5.6px;height:77.6px;background:#8a888f;border-radius:2.8px;"></div>
<div style="left:272.3px;top:611px;width:7.2px;height:7.2px;background:#a0ae5e;border-radius:4px;"></div>
<div style="top:606.8px;line-height:16px;font-size:12.4px;color:#87abe3;white-space:pre;letter-spacing:-0.001px;left:283.7px;">Output</div>
<div style="top:606.8px;line-height:16px;font-size:12.4px;color:#cfced0;white-space:pre;letter-spacing:0.072px;left:336.3px;">Debugger</div>
<div style="top:606.8px;line-height:16px;font-size:12.4px;color:#cfced0;white-space:pre;letter-spacing:-0.021px;left:407.2px;">Audio</div>
<div style="top:606.8px;line-height:16px;font-size:12.4px;color:#cfced0;white-space:pre;letter-spacing:0.177px;left:454.1px;">Animation</div>
<div style="top:606.4px;line-height:16px;font-size:12.4px;color:#8f8d94;white-space:pre;letter-spacing:-0.065px;left:869.3px;">3.7.dev</div>
<svg style="left:921px;top:606px;" width="16" height="16" viewBox="0 0 16 16"><path d="M2 1.5h12v1.8H2zM4.8 5.5L1.3 9.8h2.3v4.7h2.4V9.8h2.3zM11.2 5.5L7.7 9.8H10v4.7h2.4V9.8h2.3z" fill="#e0e0e0" /></svg>
<div style="left:954px;top:88.5px;width:277px;height:541.5px;background:#3d3b45;"></div>
<div style="left:954px;top:72.5px;width:67px;height:17px;background:#625f68;"></div>
<div style="top:71.9px;line-height:16px;font-size:12.4px;color:#cfced0;white-space:pre;letter-spacing:0.170px;left:961px;">Inspector</div>
<div style="left:1021px;top:72.5px;width:46px;height:17px;background:#2e2c34;"></div>
<div style="top:71.9px;line-height:16px;font-size:12.4px;color:#6b6971;white-space:pre;letter-spacing:-0.156px;left:1030px;">Node</div>
<svg style="left:1216px;top:72px;opacity:0.4;" width="16" height="16" viewBox="0 0 16 16"><g fill="#e0e0e0"><circle cx="8" cy="2.3" r="2.1"/><circle cx="8" cy="8" r="2.1"/><circle cx="8" cy="13.7" r="2.1"/></g></svg>
<svg style="left:963.4px;top:95.1px;" width="16" height="16" viewBox="0 0 16 16"><path d="M2.5 1v14H8v-2.5H6.5V9.5H9V7h3V5.2L8.8 1zM8 2l3 3H8z" fill="#e0e0e0" /><path d="M10.5 8.5V11H8v2.5h2.5V16H13v-2.5h2.5V11H13V8.5z" fill="#84ffb1" /></svg>
<svg style="left:994px;top:95.1px;" width="16" height="16" viewBox="0 0 16 16"><path d="M1 3v10.5L3.2 6H13V4.5H8L6.5 3zM4.3 7l-2.3 7.5h11L15.3 7z" fill="#e0e0e0" /></svg>
<svg style="left:1024.6px;top:95.1px;" width="16" height="16" viewBox="0 0 16 16"><path fill-rule="evenodd" d="M1 1v14h14V4l-3-3zm2.5 1.2H10v4.3H3.5zM8 9a2.3 2.3 0 0 1 0 4.6A2.3 2.3 0 0 1 8 9zM7.5 2.8h1.7v3.1H7.5z" fill="#e0e0e0" fill-opacity=".35"/></svg>
<svg style="left:1055.8px;top:95.1px;" width="16" height="16" viewBox="0 0 16 16"><g fill="#e0e0e0"><circle cx="8" cy="2.3" r="2.1"/><circle cx="8" cy="8" r="2.1"/><circle cx="8" cy="13.7" r="2.1"/></g></svg>
<svg style="left:1156px;top:95.1px;" width="16" height="16" viewBox="0 0 16 16"><path d="M10 1.8L5.3 8l4.7 6.2" fill="none" stroke="#e0e0e0" stroke-width="2.1" stroke-linecap="round" stroke-linejoin="round" /></svg>
<svg style="left:1178.5px;top:95.1px;opacity:0.35;" width="16" height="16" viewBox="0 0 16 16"><path d="M6 1.8L10.7 8 6 14.2" fill="none" stroke="#e0e0e0" stroke-width="2.1" stroke-linecap="round" stroke-linejoin="round" /></svg>
<svg style="left:1206.3px;top:95.1px;" width="16" height="16" viewBox="0 0 16 16"><path d="M3.3 9.5A5.5 5.5 0 1 0 5 4" fill="none" stroke="#e0e0e0" stroke-width="1.8" stroke-linecap="round" stroke-linejoin="round" /><path d="M.2 7.5l5.2.6-2.6 3.8z" fill="#e0e0e0" /><path d="M9 5.5v3.2l2.2 1" fill="none" stroke="#e0e0e0" stroke-width="1.5" stroke-linecap="round" stroke-linejoin="round" /></svg>
<div style="left:957.5px;top:117.3px;width:239.5px;height:21.5px;background:#2e2c34;border:1px solid #26252b;border-radius:2px;"></div>
<svg style="left:961.2px;top:120.4px;" width="15" height="15" viewBox="0 0 16 16"><path d="M3 3h10v10H3zM3 3l10 10" fill="none" stroke="#f0949c" stroke-width="2"/><g fill="#f0949c"><circle cx="3" cy="3" r="2"/><circle cx="13" cy="3" r="2"/><circle cx="3" cy="13" r="2"/><circle cx="13" cy="13" r="2"/></g></svg>
<div style="top:119.8px;line-height:16px;font-size:12.4px;color:#cfced0;white-space:pre;letter-spacing:0.105px;left:986.2px;">MeshInstance</div>
<svg style="left:1175.7px;top:120.5px;opacity:0.8;" width="16" height="16" viewBox="0 0 16 16"><path d="M4.5 6.5L8 10l3.5-3.5" fill="none" stroke="#e0e0e0" stroke-width="1.8" stroke-linecap="round" stroke-linejoin="round" /></svg>
<svg style="left:1205.5px;top:120px;" width="16" height="16" viewBox="0 0 16 16"><circle cx="9" cy="4.5" r="3" fill="none" stroke="#e0e0e0" stroke-width="1.8"/><path d="M6.8 6.7L4 9.5" fill="none" stroke="#e0e0e0" stroke-width="2" stroke-linecap="round" stroke-linejoin="round" /><text x="8" y="16" text-anchor="middle" font-family="Liberation Sans,DejaVu Sans,sans-serif" font-weight="bold" font-size="7" letter-spacing="-.2" fill="#e0e0e0">DOC</text></svg>
<div style="left:957.5px;top:142.4px;width:239.5px;height:21px;background:#2e2c34;border:1px solid #26252b;border-radius:2px;"></div>
<div style="top:144.7px;line-height:16px;font-size:12.4px;color:#7e7c84;white-space:pre;letter-spacing:0.131px;left:963px;">Filter properties</div>
<svg style="left:1174.5px;top:145px;" width="16" height="16" viewBox="0 0 16 16"><circle cx="6.5" cy="6.5" r="4" fill="none" stroke="#e0e0e0" stroke-width="2"/><path d="M9.8 9.8l4 4" fill="none" stroke="#e0e0e0" stroke-width="2.2" stroke-linecap="round" stroke-linejoin="round" /></svg>
<svg style="left:1205.5px;top:144.6px;" width="16" height="16" viewBox="0 0 16 16"><path d="M3.5 1h2v5.5l1.5 1.5v5.5a1.5 1.5 0 0 1-5 0V8l1.5-1.5zM10 1v3.5l1.5 1V15h2V5.5l1.5-1V1h-1.3v3h-2.4V1z" fill="#e0e0e0" /></svg>
<div style="left:957.5px;top:167.3px;width:271px;height:459.5px;background:#2e2c34;border:1px solid #1f1d22;"></div>
<div style="left:960.3px;top:170.2px;width:252.7px;height:16.8px;background:#47454f;"></div>
<svg style="left:1038.2px;top:171.1px;" width="15" height="15" viewBox="0 0 16 16"><path d="M3 3h10v10H3zM3 3l10 10" fill="none" stroke="#f0949c" stroke-width="2"/><g fill="#f0949c"><circle cx="3" cy="3" r="2"/><circle cx="13" cy="3" r="2"/><circle cx="3" cy="13" r="2"/><circle cx="13" cy="13" r="2"/></g></svg>
<div style="top:170.6px;line-height:16px;font-size:12.4px;color:#cfced0;white-space:pre;letter-spacing:0.113px;left:1056.3px;">MeshInstance</div>
<div style="top:210.6px;line-height:16px;font-size:12.4px;color:#a9a7ad;white-space:pre;letter-spacing:0.072px;left:961.1px;">Mesh</div>
<svg style="left:1067.8px;top:211px;" width="16" height="16" viewBox="0 0 16 16"><path d="M3.4 8.2A5 5 0 1 1 7.6 13.3" fill="none" stroke="#e0e0e0" stroke-width="1.8" stroke-linecap="round" stroke-linejoin="round" /><path d="M.4 6.6l5.6.1-2.9 3.9z" fill="#e0e0e0" /></svg>
<div style="left:1086.6px;top:187.4px;width:126.4px;height:63px;background:#2c2b33;border:1px solid #1f1d22;"></div>
<svg style="left:1092.8px;top:210.9px;" width="16" height="16" viewBox="0 0 16 16"><circle cx="8" cy="8" r="6" fill="none" stroke="#ffd684" stroke-width="2"/><path d="M8 2v12M2 8h12" stroke="#ffd684" stroke-width="1.6" fill="none"/></svg>
<svg style="left:1126px;top:196px" width="46" height="46" viewBox="0 0 46 46"><defs><radialGradient id="sg" cx="74%" cy="30%" r="72%"><stop offset="0" stop-color="#ffffff"/><stop offset=".28" stop-color="#f2f2f2"/><stop offset=".5" stop-color="#b0b0b0"/><stop offset=".72" stop-color="#5c5c5c"/><stop offset="1" stop-color="#2a2a2a"/></radialGradient><radialGradient id="sd" cx="0%" cy="47%" r="40%" fx="0%" fy="47%"><stop offset="0" stop-color="#000"/><stop offset=".3" stop-color="#000" stop-opacity=".95"/><stop offset=".65" stop-color="#000" stop-opacity=".5"/><stop offset="1" stop-color="#000" stop-opacity="0"/></radialGradient><radialGradient id="sb" cx="45%" cy="104%" r="40%"><stop offset="0" stop-color="#d0d0d0" stop-opacity=".85"/><stop offset="1" stop-color="#d8d8d8" stop-opacity="0"/></radialGradient><clipPath id="sc"><circle cx="22.8" cy="23.4" r="21.8"/></clipPath></defs><g clip-path="url(#sc)"><rect width="46" height="46" fill="url(#sg)"/><rect width="46" height="46" fill="url(#sd)"/><rect width="46" height="46" fill="url(#sb)"/></g></svg>
<svg style="left:1191.6px;top:211.5px;opacity:0.8;" width="16" height="16" viewBox="0 0 16 16"><path d="M4.5 6.5L8 10l3.5-3.5" fill="none" stroke="#e0e0e0" stroke-width="1.8" stroke-linecap="round" stroke-linejoin="round" /></svg>
<div style="top:257px;line-height:16px;font-size:12.4px;color:#a9a7ad;white-space:pre;letter-spacing:-0.152px;left:961.1px;">Skin</div>
<div style="left:1086.6px;top:254.5px;width:126.4px;height:20.2px;background:#2c2b33;border:1px solid #1f1d22;"></div>
<div style="top:256.6px;line-height:16px;font-size:12.4px;color:#cfced0;white-space:pre;letter-spacing:0.280px;left:1115.3px;">[empty]</div>
<svg style="left:1191.6px;top:257px;opacity:0.8;" width="16" height="16" viewBox="0 0 16 16"><path d="M4.5 6.5L8 10l3.5-3.5" fill="none" stroke="#e0e0e0" stroke-width="1.8" stroke-linecap="round" stroke-linejoin="round" /></svg>
<div style="top:280.7px;line-height:16px;font-size:12.4px;color:#a9a7ad;white-space:pre;letter-spacing:0.008px;left:961.1px;">Skeleton</div>
<div style="left:1086.6px;top:278.1px;width:126.4px;height:21.5px;background:#26252b;"></div>
<svg style="left:1092.8px;top:281px;" width="16" height="16" viewBox="0 0 16 16"><circle cx="8" cy="8" r="5" fill="none" stroke="#f0949c" stroke-width="2"/></svg>
<div style="top:280.7px;line-height:16px;font-size:12.4px;color:#cfced0;white-space:pre;letter-spacing:0.030px;left:1125.9px;">Spatial</div>
<svg style="left:1190.8px;top:280.6px;" width="16" height="16" viewBox="0 0 16 16"><path d="M7 1h2v6.5h2.5A1.5 1.5 0 0 1 13 9v1H3V9a1.5 1.5 0 0 1 1.5-1.5H7zM3 11h10l1 4H2z" fill="#e0e0e0" /></svg>
<div style="left:960.3px;top:300px;width:252.7px;height:16.2px;background:#33313a;"></div>
<svg style="left:961.2px;top:300.7px;" width="15" height="15" viewBox="0 0 16 16"><path d="M6 4.3l3.7 3.7-3.7 3.7" fill="none" stroke="#e0e0e0" stroke-width="2.3" stroke-linecap="round" stroke-linejoin="round" stroke-opacity=".6"/></svg>
<div style="top:300.2px;line-height:16px;font-size:12.4px;color:#cfced0;white-space:pre;letter-spacing:0.007px;left:979px;">Software Skinning</div>
<div style="left:960.3px;top:316.2px;width:252.7px;height:16.2px;background:#33313a;"></div>
<svg style="left:961.2px;top:316px;" width="15" height="15" viewBox="0 0 16 16"><path d="M6 4.3l3.7 3.7-3.7 3.7" fill="none" stroke="#e0e0e0" stroke-width="2.3" stroke-linecap="round" stroke-linejoin="round" stroke-opacity=".6"/></svg>
<div style="top:315.5px;line-height:16px;font-size:12.4px;color:#cfced0;white-space:pre;letter-spacing:0.315px;left:979px;">Material</div>
<div style="left:960.3px;top:332.4px;width:252.7px;height:16.2px;background:#47454f;"></div>
<svg style="left:1024.1px;top:332px;" width="17" height="17" viewBox="0 0 16 16"><path d="M8 .9l6.6 3.5v7.2L8 15.1l-6.6-3.5V4.4z" fill="#e0e0e0" /><path d="M3.2 5.2L7.6 7.6v5.4M7.6 7.6l5.2-2.6" fill="none" stroke="#3f3d47" stroke-width="2"/></svg>
<div style="top:332.5px;line-height:16px;font-size:12.4px;color:#cfced0;white-space:pre;letter-spacing:0.141px;left:1043.2px;">GeometryInstance</div>
<div style="left:960.3px;top:348.6px;width:252.7px;height:16.4px;background:#33313a;"></div>
<svg style="left:961.2px;top:349.4px;" width="15" height="15" viewBox="0 0 16 16"><path d="M6 4.3l3.7 3.7-3.7 3.7" fill="none" stroke="#e0e0e0" stroke-width="2.3" stroke-linecap="round" stroke-linejoin="round" stroke-opacity=".6"/></svg>
<div style="top:348.9px;line-height:16px;font-size:12.4px;color:#cfced0;white-space:pre;letter-spacing:0.174px;left:979px;">Geometry</div>
<div style="left:960.3px;top:365px;width:252.7px;height:16.3px;background:#33313a;"></div>
<svg style="left:961.2px;top:365.2px;" width="15" height="15" viewBox="0 0 16 16"><path d="M6 4.3l3.7 3.7-3.7 3.7" fill="none" stroke="#e0e0e0" stroke-width="2.3" stroke-linecap="round" stroke-linejoin="round" stroke-opacity=".6"/></svg>
<div style="top:364.7px;line-height:16px;font-size:12.4px;color:#cfced0;white-space:pre;letter-spacing:-0.050px;left:979px;">Baked Light</div>
<div style="left:960.3px;top:381.3px;width:252.7px;height:16.5px;background:#47454f;"></div>
<svg style="left:1036.1px;top:381.05px;" width="17" height="17" viewBox="0 0 16 16"><path d="M8 .9l6.6 3.5v7.2L8 15.1l-6.6-3.5V4.4z" fill="#e0e0e0" /><path d="M3.2 5.2L7.6 7.6v5.4M7.6 7.6l5.2-2.6" fill="none" stroke="#3f3d47" stroke-width="2"/></svg>
<div style="top:381.55px;line-height:16px;font-size:12.4px;color:#cfced0;white-space:pre;letter-spacing:0.023px;left:1054.9px;">VisualInstance</div>
<div style="top:399px;line-height:16px;font-size:12.4px;color:#a9a7ad;white-space:pre;letter-spacing:-0.167px;left:961.1px;">Layers</div>
<div style="left:960.2px;top:416px;width:252.3px;height:44.3px;background:#26252b;"></div>
<div style="left:964.2px;top:420.2px;width:17.8px;height:17.8px;background:#b4b3b7;"></div>
<div style="top:421.2px;line-height:16px;font-size:12.4px;color:#f2f2f2;white-space:pre;left:823.1px;width:300px;text-align:center;letter-spacing:-.3px;">1</div>
<div style="left:983.2px;top:420.2px;width:17.8px;height:17.8px;background:#4b4a52;"></div>
<div style="top:421.2px;line-height:16px;font-size:12.4px;color:#737179;white-space:pre;left:842.1px;width:300px;text-align:center;letter-spacing:-.3px;">2</div>
<div style="left:1002.2px;top:420.2px;width:17.8px;height:17.8px;background:#4b4a52;"></div>
<div style="top:421.2px;line-height:16px;font-size:12.4px;color:#737179;white-space:pre;left:861.1px;width:300px;text-align:center;letter-spacing:-.3px;">3</div>
<div style="left:1021.2px;top:420.2px;width:17.8px;height:17.8px;background:#4b4a52;"></div>
<div style="top:421.2px;line-height:16px;font-size:12.4px;color:#737179;white-space:pre;left:880.1px;width:300px;text-align:center;letter-spacing:-.3px;">4</div>
<div style="left:1040.2px;top:420.2px;width:17.8px;height:17.8px;background:#4b4a52;"></div>
<div style="top:421.2px;line-height:16px;font-size:12.4px;color:#737179;white-space:pre;left:899.1px;width:300px;text-align:center;letter-spacing:-.3px;">5</div>
<div style="left:1062.3px;top:420.2px;width:17.8px;height:17.8px;background:#4b4a52;"></div>
<div style="top:421.2px;line-height:16px;font-size:12.4px;color:#737179;white-space:pre;left:921.2px;width:300px;text-align:center;letter-spacing:-.3px;">11</div>
<div style="left:1081.3px;top:420.2px;width:17.8px;height:17.8px;background:#4b4a52;"></div>
<div style="top:421.2px;line-height:16px;font-size:12.4px;color:#737179;white-space:pre;left:940.2px;width:300px;text-align:center;letter-spacing:-.3px;">12</div>
<div style="left:1100.3px;top:420.2px;width:17.8px;height:17.8px;background:#4b4a52;"></div>
<div style="top:421.2px;line-height:16px;font-size:12.4px;color:#737179;white-space:pre;left:959.2px;width:300px;text-align:center;letter-spacing:-.3px;">13</div>
<div style="left:1119.3px;top:420.2px;width:17.8px;height:17.8px;background:#4b4a52;"></div>
<div style="top:421.2px;line-height:16px;font-size:12.4px;color:#737179;white-space:pre;left:978.2px;width:300px;text-align:center;letter-spacing:-.3px;">14</div>
<div style="left:1138.3px;top:420.2px;width:17.8px;height:17.8px;background:#4b4a52;"></div>
<div style="top:421.2px;line-height:16px;font-size:12.4px;color:#737179;white-space:pre;left:997.2px;width:300px;text-align:center;letter-spacing:-.3px;">15</div>
<div style="left:964.2px;top:439.3px;width:17.8px;height:17.8px;background:#4b4a52;"></div>
<div style="top:440.3px;line-height:16px;font-size:12.4px;color:#737179;white-space:pre;left:823.1px;width:300px;text-align:center;letter-spacing:-.3px;">6</div>
<div style="left:983.2px;top:439.3px;width:17.8px;height:17.8px;background:#4b4a52;"></div>
<div style="top:440.3px;line-height:16px;font-size:12.4px;color:#737179;white-space:pre;left:842.1px;width:300px;text-align:center;letter-spacing:-.3px;">7</div>
<div style="left:1002.2px;top:439.3px;width:17.8px;height:17.8px;background:#4b4a52;"></div>
<div style="top:440.3px;line-height:16px;font-size:12.4px;color:#737179;white-space:pre;left:861.1px;width:300px;text-align:center;letter-spacing:-.3px;">8</div>
<div style="left:1021.2px;top:439.3px;width:17.8px;height:17.8px;background:#4b4a52;"></div>
<div style="top:440.3px;line-height:16px;font-size:12.4px;color:#737179;white-space:pre;left:880.1px;width:300px;text-align:center;letter-spacing:-.3px;">9</div>
<div style="left:1040.2px;top:439.3px;width:17.8px;height:17.8px;background:#4b4a52;"></div>
<div style="top:440.3px;line-height:16px;font-size:12.4px;color:#737179;white-space:pre;left:899.1px;width:300px;text-align:center;letter-spacing:-.3px;">10</div>
<div style="left:1062.3px;top:439.3px;width:17.8px;height:17.8px;background:#4b4a52;"></div>
<div style="top:440.3px;line-height:16px;font-size:12.4px;color:#737179;white-space:pre;left:921.2px;width:300px;text-align:center;letter-spacing:-.3px;">16</div>
<div style="left:1081.3px;top:439.3px;width:17.8px;height:17.8px;background:#4b4a52;"></div>
<div style="top:440.3px;line-height:16px;font-size:12.4px;color:#737179;white-space:pre;left:940.2px;width:300px;text-align:center;letter-spacing:-.3px;">17</div>
<div style="left:1100.3px;top:439.3px;width:17.8px;height:17.8px;background:#4b4a52;"></div>
<div style="top:440.3px;line-height:16px;font-size:12.4px;color:#737179;white-space:pre;left:959.2px;width:300px;text-align:center;letter-spacing:-.3px;">18</div>
<div style="left:1119.3px;top:439.3px;width:17.8px;height:17.8px;background:#4b4a52;"></div>
<div style="top:440.3px;line-height:16px;font-size:12.4px;color:#737179;white-space:pre;left:978.2px;width:300px;text-align:center;letter-spacing:-.3px;">19</div>
<div style="left:1138.3px;top:439.3px;width:17.8px;height:17.8px;background:#4b4a52;"></div>
<div style="top:440.3px;line-height:16px;font-size:12.4px;color:#737179;white-space:pre;left:997.2px;width:300px;text-align:center;letter-spacing:-.3px;">20</div>
<div style="left:1193.3px;top:416px;width:19.2px;height:44.3px;background:#2e2c34;"></div>
<div style="top:432.3px;line-height:16px;font-size:12.4px;color:#cfced0;white-space:pre;left:1052.9px;width:300px;text-align:center;">...</div>
<div style="left:960.3px;top:460.6px;width:252.7px;height:16.4px;background:#33313a;"></div>
<svg style="left:961.2px;top:461.3px;" width="15" height="15" viewBox="0 0 16 16"><path d="M6 4.3l3.7 3.7-3.7 3.7" fill="none" stroke="#e0e0e0" stroke-width="2.3" stroke-linecap="round" stroke-linejoin="round" stroke-opacity=".6"/></svg>
<div style="top:460.8px;line-height:16px;font-size:12.4px;color:#cfced0;white-space:pre;letter-spacing:0.119px;left:979px;">Sorting</div>
<div style="left:960.3px;top:477px;width:252.7px;height:16.9px;background:#47454f;"></div>
<svg style="left:1042.2px;top:476.95px;" width="17" height="17" viewBox="0 0 16 16"><path d="M8 .9l6.6 3.5v7.2L8 15.1l-6.6-3.5V4.4z" fill="#e0e0e0" /><path d="M3.2 5.2L7.6 7.6v5.4M7.6 7.6l5.2-2.6" fill="none" stroke="#3f3d47" stroke-width="2"/></svg>
<div style="top:477.45px;line-height:16px;font-size:12.4px;color:#cfced0;white-space:pre;letter-spacing:0.018px;left:1061px;">CullInstance</div>
<div style="left:960.3px;top:493.9px;width:252.7px;height:16.2px;background:#33313a;"></div>
<svg style="left:961.2px;top:494px;" width="15" height="15" viewBox="0 0 16 16"><path d="M6 4.3l3.7 3.7-3.7 3.7" fill="none" stroke="#e0e0e0" stroke-width="2.3" stroke-linecap="round" stroke-linejoin="round" stroke-opacity=".6"/></svg>
<div style="top:493.5px;line-height:16px;font-size:12.4px;color:#cfced0;white-space:pre;letter-spacing:-0.040px;left:979px;">Portals</div>
<div style="left:960.3px;top:510.1px;width:252.7px;height:16.9px;background:#47454f;"></div>
<svg style="left:1058px;top:510.55px;" width="16" height="16" viewBox="0 0 16 16"><circle cx="8" cy="8" r="5" fill="none" stroke="#f0949c" stroke-width="2"/></svg>
<div style="top:510.55px;line-height:16px;font-size:12.4px;color:#cfced0;white-space:pre;letter-spacing:-0.042px;left:1076px;">Spatial</div>
<div style="left:960.3px;top:527px;width:252.7px;height:16.4px;background:#33313a;"></div>
<svg style="left:961.2px;top:527.2px;" width="15" height="15" viewBox="0 0 16 16"><path d="M6 4.3l3.7 3.7-3.7 3.7" fill="none" stroke="#e0e0e0" stroke-width="2.3" stroke-linecap="round" stroke-linejoin="round" stroke-opacity=".6"/></svg>
<div style="top:526.7px;line-height:16px;font-size:12.4px;color:#cfced0;white-space:pre;letter-spacing:0.278px;left:979px;">Transform</div>
<div style="left:960.3px;top:543.2px;width:252.7px;height:16.5px;background:#33313a;"></div>
<svg style="left:961.2px;top:543.2px;" width="15" height="15" viewBox="0 0 16 16"><path d="M6 4.3l3.7 3.7-3.7 3.7" fill="none" stroke="#e0e0e0" stroke-width="2.3" stroke-linecap="round" stroke-linejoin="round" stroke-opacity=".6"/></svg>
<div style="top:542.7px;line-height:16px;font-size:12.4px;color:#cfced0;white-space:pre;letter-spacing:0.394px;left:979px;">Matrix</div>
<div style="left:960.3px;top:559.4px;width:252.7px;height:16.3px;background:#33313a;"></div>
<svg style="left:961.2px;top:559.2px;" width="15" height="15" viewBox="0 0 16 16"><path d="M6 4.3l3.7 3.7-3.7 3.7" fill="none" stroke="#e0e0e0" stroke-width="2.3" stroke-linecap="round" stroke-linejoin="round" stroke-opacity=".6"/></svg>
<div style="top:558.7px;line-height:16px;font-size:12.4px;color:#cfced0;white-space:pre;letter-spacing:0.047px;left:979px;">Visibility</div>
<div style="left:960.3px;top:575.5px;width:252.7px;height:15.8px;background:#33313a;"></div>
<svg style="left:961.2px;top:575.2px;" width="15" height="15" viewBox="0 0 16 16"><path d="M6 4.3l3.7 3.7-3.7 3.7" fill="none" stroke="#e0e0e0" stroke-width="2.3" stroke-linecap="round" stroke-linejoin="round" stroke-opacity=".6"/></svg>
<div style="top:574.7px;line-height:16px;font-size:12.4px;color:#cfced0;white-space:pre;letter-spacing:-0.042px;left:979px;">Misc</div>
<div style="left:960.3px;top:591.3px;width:252.7px;height:16.5px;background:#47454f;"></div>
<svg style="left:1061.9px;top:591.55px;" width="16" height="16" viewBox="0 0 16 16"><circle cx="8" cy="8" r="5" fill="none" stroke="#e0e0e0" stroke-width="2"/></svg>
<div style="top:591.55px;line-height:16px;font-size:12.4px;color:#cfced0;white-space:pre;letter-spacing:-0.156px;left:1080.2px;">Node</div>
<div style="top:610.3px;line-height:16px;font-size:12.4px;color:#a9a7ad;white-space:pre;letter-spacing:-0.128px;left:961.1px;">Pause Mode</div>
<div style="left:1086.6px;top:609px;width:126.4px;height:17.3px;background:#26252b;"></div>
<div style="top:610.3px;line-height:16px;font-size:12.4px;color:#cfced0;white-space:pre;letter-spacing:0.438px;left:1092.5px;">Inherit</div>
<svg style="left:1195.8px;top:610.8px;opacity:0.9;" width="16" height="16" viewBox="0 0 16 16"><path d="M4.5 6.5L8 10l3.5-3.5" fill="none" stroke="#e0e0e0" stroke-width="1.8" stroke-linecap="round" stroke-linejoin="round" /></svg>
<div style="left:1219.3px;top:170px;width:5.4px;height:452px;background:#3a3842;border-radius:2.7px;"></div>
<div style="left:1219.3px;top:170px;width:5.4px;height:377.5px;background:#77757c;border-radius:2.7px;"></div>
</div></body></html>
